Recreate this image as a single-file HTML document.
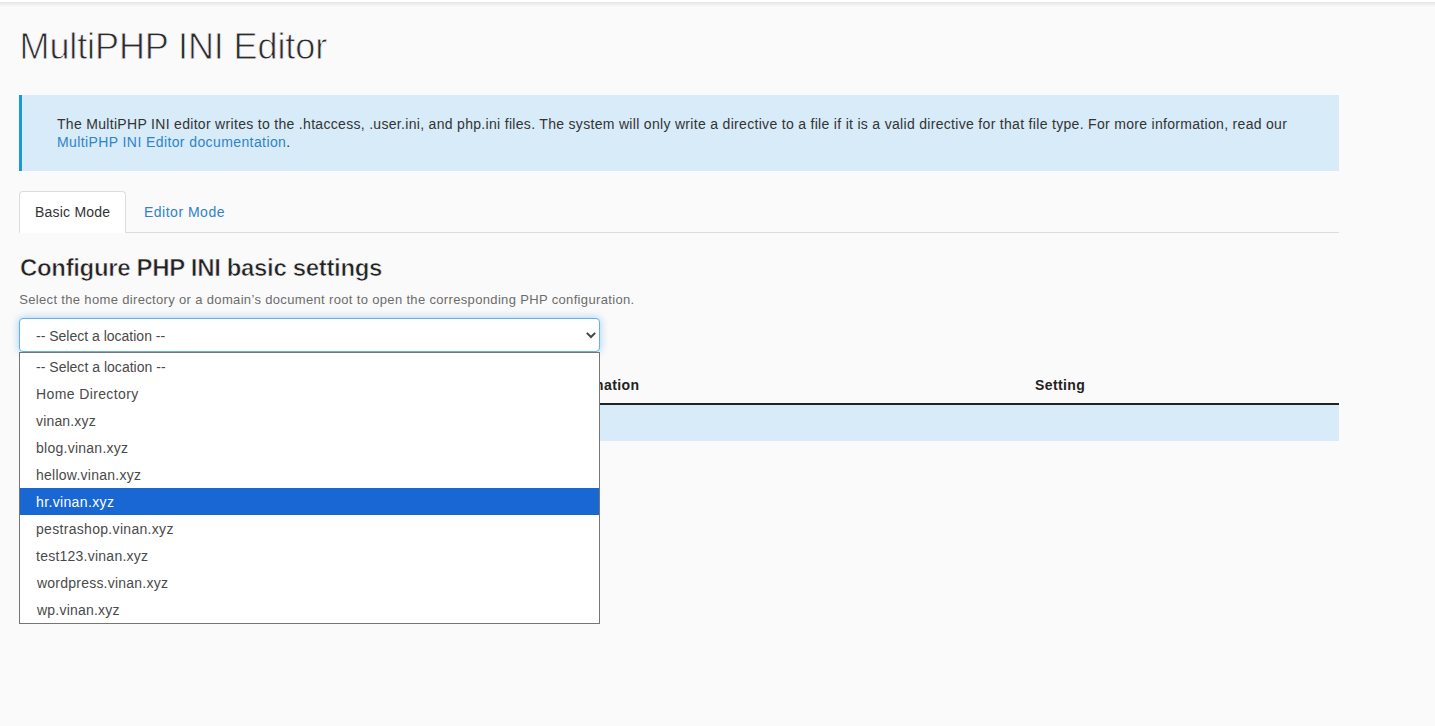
<!DOCTYPE html>
<html><head><meta charset="utf-8">
<style>
html,body{margin:0;padding:0;}
body{width:1435px;height:726px;overflow:hidden;background:#fafafa;position:relative;font-family:"Liberation Sans",sans-serif;color:#293a4a;}
.a{position:absolute;white-space:nowrap;}
#topbar{position:absolute;left:0;top:0;width:1435px;height:2px;background:#fff;}
#topshadow{position:absolute;left:0;top:2px;width:1435px;height:5px;background:linear-gradient(#e6e6e6,#fafafa);}
#title{left:19.5px;top:25px;font-size:36px;line-height:44px;color:#2b2b2b;letter-spacing:-0.1px;-webkit-text-stroke:0.8px #fafafa;}
#info{position:absolute;left:19px;top:95px;width:1320px;height:76px;background:#d7ebf8;}
#infobar{position:absolute;left:19px;top:95px;width:3px;height:76px;background:#179bd7;}
.itxt{font-size:14px;line-height:18px;color:#333;}
.link{color:#3083c9;}
#tab1{position:absolute;left:19px;top:191px;width:105px;height:41px;border:1px solid #ddd;border-bottom:none;border-radius:4px 4px 0 0;background:#fff;}
#tabline{position:absolute;left:19px;top:232px;width:1320px;height:1px;background:#ddd;}
.ttxt{font-size:14px;line-height:18px;}
#h2{left:20px;top:253px;font-size:24px;line-height:30px;font-weight:bold;color:#222;letter-spacing:-0.34px;-webkit-text-stroke:0.6px #fafafa;}
#desc{left:19.2px;top:292px;font-size:13px;line-height:16px;color:#6c6c6c;letter-spacing:0.34px;}
#sel{position:absolute;left:19px;top:318px;width:579px;height:32px;border:1px solid #66afe9;border-radius:4px;background:#fff;box-shadow:0 0 8px rgba(102,175,233,.6);}
#dd{position:absolute;left:19px;top:352px;width:579px;height:270px;border:1px solid #767676;background:#fff;}
.opt{position:absolute;left:0;width:579px;height:27px;}
.opt span{position:absolute;left:16px;top:5px;font-size:14px;line-height:18px;color:#4a4a4a;white-space:nowrap;}
.opt.s{background:#1967d2;}
.opt.s span{color:#fff;}
#thb{position:absolute;left:19px;top:403px;width:1320px;height:2px;background:#222;}
#trow{position:absolute;left:19px;top:405px;width:1320px;height:36px;background:#d7ebf8;}
.th{font-size:14px;line-height:18px;font-weight:bold;color:#222;}
</style></head><body>
<div id="topbar"></div><div id="topshadow"></div>
<div id="title" class="a">MultiPHP INI Editor</div>
<div id="info"></div><div id="infobar"></div>
<div class="a itxt" style="left:57px;top:115px;letter-spacing:0.31px;">The MultiPHP INI editor writes to the .htaccess, .user.ini, and php.ini files. The system will only write a directive to a file if it is a valid directive for that file type. For more information, read our</div>
<div class="a itxt" style="left:57px;top:133px;letter-spacing:0.4px;"><span class="link">MultiPHP INI Editor documentation</span>.</div>
<div id="tab1"></div><div id="tabline"></div>
<div id="tabcover" style="position:absolute;left:20px;top:232px;width:105px;height:1px;background:#fff;"></div>
<div class="a ttxt" style="left:35px;top:203px;color:#333;letter-spacing:0.22px;">Basic Mode</div>
<div class="a ttxt link" style="left:144px;top:203px;letter-spacing:0.5px;">Editor Mode</div>
<div id="h2" class="a">Configure PHP INI basic settings</div>
<div id="desc" class="a">Select the home directory or a domain’s document root to open the corresponding PHP configuration.</div>
<div id="thb"></div><div id="trow"></div>
<div class="a th" style="left:40px;top:376px;">PHP Directive</div>
<div class="a th" style="left:558px;top:376px;letter-spacing:0.4px;">Information</div>
<div class="a th" style="left:1035px;top:376px;letter-spacing:0.4px;">Setting</div>
<div id="sel"></div>
<div class="a" style="left:36px;top:327px;font-size:14px;line-height:18px;color:#4a4a4a;">-- Select a location --</div>
<svg class="a" style="left:585px;top:330px;" width="12" height="10" viewBox="0 0 12 10"><path d="M1.8 2.9 L6 7 L10.2 2.9" fill="none" stroke="#444" stroke-width="2"/></svg>
<div id="dd">
<div class="opt" style="top:0px"><span style="letter-spacing:0.02px">-- Select a location --</span></div>
<div class="opt" style="top:27px"><span style="letter-spacing:0.385px">Home Directory</span></div>
<div class="opt" style="top:54px"><span style="letter-spacing:0.16px">vinan.xyz</span></div>
<div class="opt" style="top:81px"><span style="letter-spacing:0.255px">blog.vinan.xyz</span></div>
<div class="opt" style="top:108px"><span style="letter-spacing:0.25px">hellow.vinan.xyz</span></div>
<div class="opt s" style="top:135px"><span style="letter-spacing:0.36px">hr.vinan.xyz</span></div>
<div class="opt" style="top:162px"><span style="letter-spacing:0.31px">pestrashop.vinan.xyz</span></div>
<div class="opt" style="top:189px"><span style="letter-spacing:0.24px">test123.vinan.xyz</span></div>
<div class="opt" style="top:216px"><span style="letter-spacing:0.225px;left:17px">wordpress.vinan.xyz</span></div>
<div class="opt" style="top:243px"><span style="letter-spacing:0.22px;left:17px">wp.vinan.xyz</span></div>
</div>
</body></html>
